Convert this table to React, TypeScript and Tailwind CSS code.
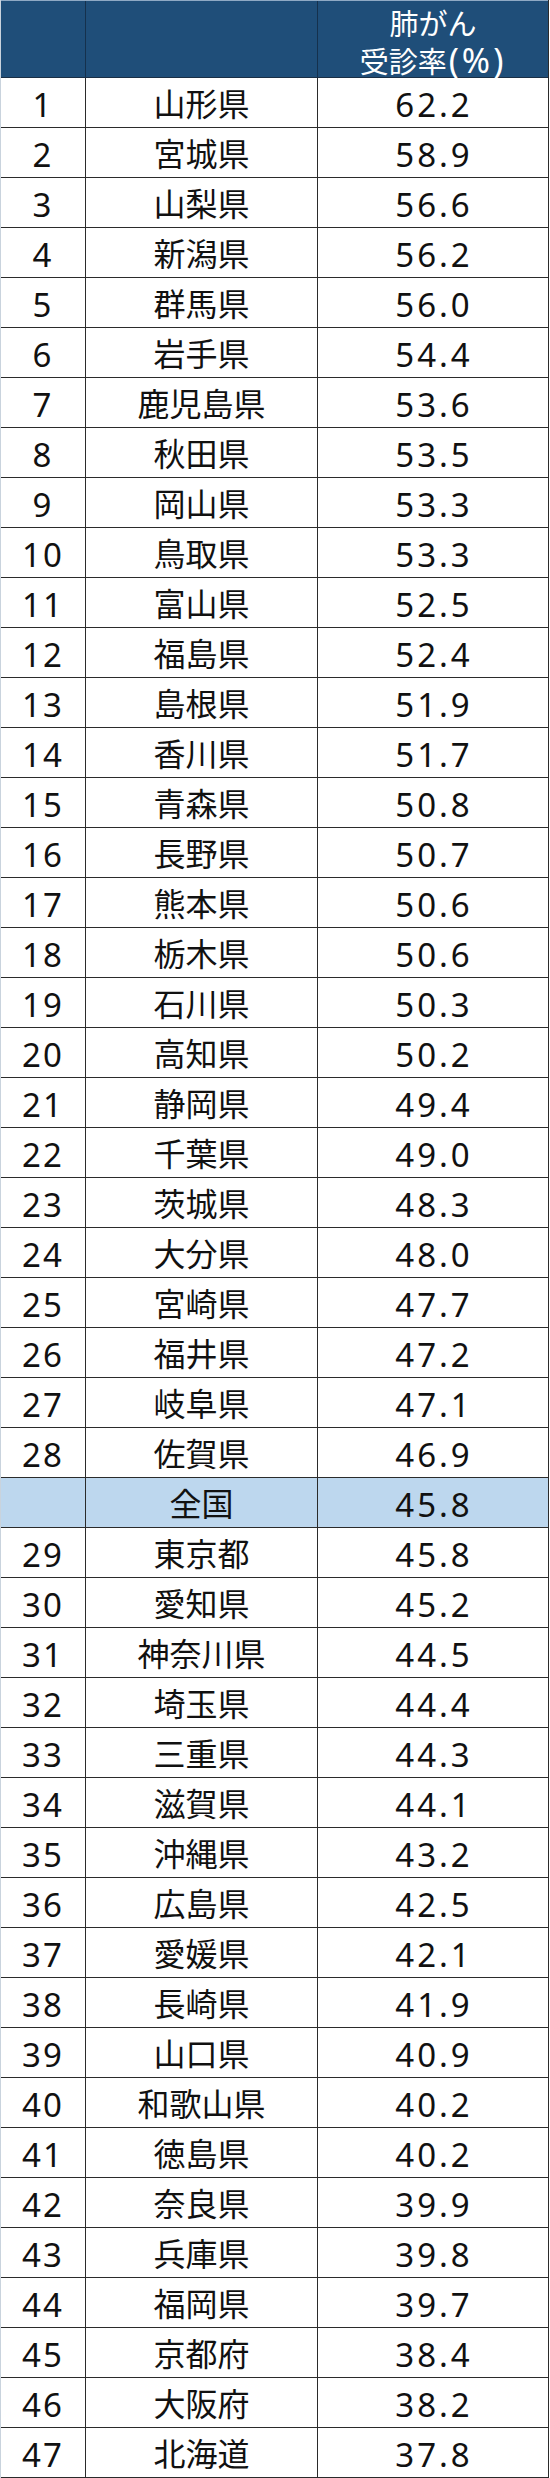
import React from "react";

const rows: [string, string, string][] = [
  ["1", "山形県", "62.2"],
  ["2", "宮城県", "58.9"],
  ["3", "山梨県", "56.6"],
  ["4", "新潟県", "56.2"],
  ["5", "群馬県", "56.0"],
  ["6", "岩手県", "54.4"],
  ["7", "鹿児島県", "53.6"],
  ["8", "秋田県", "53.5"],
  ["9", "岡山県", "53.3"],
  ["10", "鳥取県", "53.3"],
  ["11", "富山県", "52.5"],
  ["12", "福島県", "52.4"],
  ["13", "島根県", "51.9"],
  ["14", "香川県", "51.7"],
  ["15", "青森県", "50.8"],
  ["16", "長野県", "50.7"],
  ["17", "熊本県", "50.6"],
  ["18", "栃木県", "50.6"],
  ["19", "石川県", "50.3"],
  ["20", "高知県", "50.2"],
  ["21", "静岡県", "49.4"],
  ["22", "千葉県", "49.0"],
  ["23", "茨城県", "48.3"],
  ["24", "大分県", "48.0"],
  ["25", "宮崎県", "47.7"],
  ["26", "福井県", "47.2"],
  ["27", "岐阜県", "47.1"],
  ["28", "佐賀県", "46.9"],
  ["", "全国", "45.8"],
  ["29", "東京都", "45.8"],
  ["30", "愛知県", "45.2"],
  ["31", "神奈川県", "44.5"],
  ["32", "埼玉県", "44.4"],
  ["33", "三重県", "44.3"],
  ["34", "滋賀県", "44.1"],
  ["35", "沖縄県", "43.2"],
  ["36", "広島県", "42.5"],
  ["37", "愛媛県", "42.1"],
  ["38", "長崎県", "41.9"],
  ["39", "山口県", "40.9"],
  ["40", "和歌山県", "40.2"],
  ["41", "徳島県", "40.2"],
  ["42", "奈良県", "39.9"],
  ["43", "兵庫県", "39.8"],
  ["44", "福岡県", "39.7"],
  ["45", "京都府", "38.4"],
  ["46", "大阪府", "38.2"],
  ["47", "北海道", "37.8"],
];

const font = {
  fontFamily: '"Noto Sans", "Noto Sans CJK JP", sans-serif',
};

export default function App() {
  return (
    <div className="w-[550px] h-[2478px] bg-white" style={font}>
      <div className="w-[549px] border-l border-r border-l-[#c9d3dd] border-r-[#2b2b2b] flex flex-col">
        <div className="h-[78px] bg-[#1f4e79] border-t border-t-[#8fa9c4] border-b border-b-[#1a2f45] grid grid-cols-[85px_232px_230px]">
          <div className="border-r border-r-[#15314d]" />
          <div className="border-r border-r-[#15314d]" />
          <div className="flex flex-col items-center pt-[5px] text-white text-[29px] leading-[36px]">
            <span>肺がん</span>
            <span className="whitespace-nowrap">
              受診率
              <span className="text-[34px] leading-[36px] tracking-[3px] pl-[2px]">(%)</span>
            </span>
          </div>
        </div>
        {rows.map(([rank, name, val]) => (
          <div
            key={name}
            className={
              "h-[50px] border-b border-b-[#2b2b2b] grid grid-cols-[85px_232px_230px] text-[#111] " +
              (rank === "" ? "bg-[#bdd7ee]" : "bg-white")
            }
          >
            <div className="border-r border-r-[#2b2b2b] flex items-center justify-center pt-[3px] text-[33px] leading-none tracking-[2px]">
              {rank}
            </div>
            <div className="border-r border-r-[#2b2b2b] flex items-center justify-center pt-[3px] text-[32px] leading-none">
              {name}
            </div>
            <div className="flex items-center justify-center pt-[3px] pl-[2px] text-[33px] leading-none tracking-[3px]">
              {val}
            </div>
          </div>
        ))}
      </div>
    </div>
  );
}
